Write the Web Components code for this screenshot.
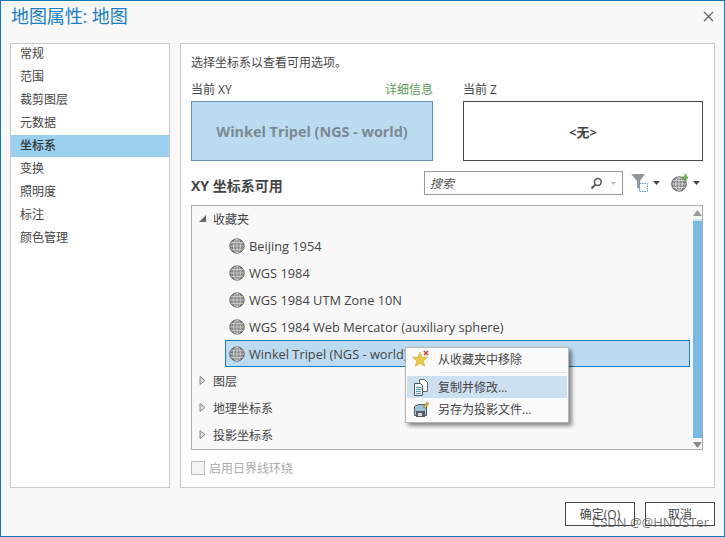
<!DOCTYPE html>
<html lang="zh-CN"><head><meta charset="utf-8"><title>地图属性</title>
<style>
html,body{margin:0;padding:0;background:#fff}
body{font:12px "Open Sans","Noto Sans CJK SC",sans-serif;color:#444}
</style></head><body>
<map-dialog heading="地图属性: 地图">
  <nav-list slot="nav">
    <nav-item>常规</nav-item><nav-item>范围</nav-item><nav-item>裁剪图层</nav-item><nav-item>元数据</nav-item>
    <nav-item selected>坐标系</nav-item><nav-item>变换</nav-item><nav-item>照明度</nav-item><nav-item>标注</nav-item><nav-item>颜色管理</nav-item>
  </nav-list>
  <crs-page slot="page"></crs-page>
  <dlg-button slot="buttons">确定(O)</dlg-button>
  <dlg-button slot="buttons">取消</dlg-button>
</map-dialog>
<script>
const FONT='"Open Sans","Noto Sans CJK SC",sans-serif';
const GLOBE=`<svg width="16" height="16" viewBox="0 0 16 16"><circle cx="8" cy="8" r="7.2" fill="#858585" stroke="#666" stroke-width="1"/><g fill="none" stroke="#d8d8d8" stroke-width=".8"><ellipse cx="8" cy="8" rx="3.4" ry="7"/><path d="M8 1v14M1 8h14M2 4.600h12M2 11.400h12"/></g></svg>`;
function def(name,html,init){
  customElements.define(name,class extends HTMLElement{
    constructor(){super();this.attachShadow({mode:'open'}).innerHTML=typeof html==='function'?html(this):html;}
    connectedCallback(){
      if(typeof html==='function')this.shadowRoot.innerHTML=html(this);
      if(init)init(this);
    }
  });
}
def('map-dialog',h=>`<style>
:host{display:flex;flex-direction:column;position:relative;box-sizing:border-box;width:725px;height:537px;background:#f8f8f8;border:1px solid #1279b6;font:12px ${FONT};color:#444;overflow:hidden}
header{height:42px;flex:none;display:flex;align-items:center;justify-content:space-between;padding:0 10px 12px 10px;box-sizing:border-box}
h1{margin:0;font:400 18px ${FONT};color:#1a7fc0;line-height:24px;letter-spacing:-.1px}
svg{display:block}
main{flex:none;display:flex;gap:10px;height:445px;padding:0 9px}
footer{flex:1;display:flex;justify-content:flex-end;gap:10px;padding:14px 9px 0}
.mark{position:absolute;left:591px;top:511px;font:13px/20px ${FONT};color:rgba(75,75,75,.75);white-space:nowrap;pointer-events:none}
</style>
<header><h1>${h.getAttribute('heading')}</h1><svg width="11" height="11" viewBox="0 0 11 11"><path d="M1 1l9 9M10 1l-9 9" stroke="#666" stroke-width="1.3" fill="none"/></svg></header>
<main><slot name="nav"></slot><slot name="page"></slot></main>
<footer><slot name="buttons"></slot></footer>
<div class="mark">CSDN @@HNUSTer</div>`);
def('nav-list',`<style>:host{display:flex;flex-direction:column;gap:1px;box-sizing:border-box;width:160px;height:445px;background:#fff;border:1px solid #c9c9c9;overflow:hidden}
.in{display:flex;flex-direction:column;gap:1px;margin-top:-1px}</style><div class="in"><slot></slot></div>`);
def('nav-item',`<style>:host{display:flex;align-items:center;height:22px;padding-left:9px;color:#444;line-height:22px}
:host([selected]){background:#9bd0f0;font-weight:500;color:#333}</style><slot></slot>`);
def('dlg-button',`<style>:host{display:flex;align-items:center;justify-content:center;box-sizing:border-box;width:70px;height:24px;background:#fff;border:1px solid #444;color:#444}</style><slot></slot>`);
def('crs-box',h=>`<style>:host{display:flex;align-items:center;justify-content:center;box-sizing:border-box;height:60px;border:1px solid ${h.hasAttribute('active')?'#5b94bd':'#444'};background:${h.hasAttribute('active')?'#bcdbf1':'#fff'};color:${h.hasAttribute('active')?'#7b8892':'#444'};font-weight:700;font-size:${h.hasAttribute('active')?'14.4':'13'}px}</style><slot></slot>`);
def('search-box',`<style>:host{display:flex;align-items:center;box-sizing:border-box;width:199px;height:24px;border:1px solid #9a9a9a;background:#fff;padding:0 6px 0 5px;flex:none}
i{flex:1;font-style:italic;color:#555}svg{display:block}</style>
<i>搜索</i>
<svg width="13" height="13" viewBox="0 0 13 13"><circle cx="7.8" cy="5" r="3.4" fill="none" stroke="#555" stroke-width="1.5"/><path d="M5.3 7.6L1.5 11.5" stroke="#555" stroke-width="2"/></svg>
<svg style="margin-left:8px" width="5" height="3" viewBox="0 0 5 3"><path d="M0 0h5L2.500 3z" fill="#bbb"/></svg>`);
def('tree-row',h=>{
  const k=h.getAttribute('kind');
  const a=k==='open'?`<svg width="7" height="7" viewBox="0 0 7 7"><path d="M0 7h7V0z" fill="#666"/></svg>`:
    `<svg width="7" height="9" viewBox="0 0 7 9"><path d="M1 .5l5 4-5 4z" fill="#ddd" stroke="#888"/></svg>`;
  return `<style>:host{display:flex;align-items:center;box-sizing:border-box;height:27px;color:#444}
  .g{display:flex;align-items:center;flex:1;height:100%;box-sizing:border-box;margin-left:33px;padding-left:3px;gap:4px;font-size:12.800px;border:1px solid transparent}
  :host([selected]) .g{background:#bcdbf1;border-color:#1b7db8}
  .f{display:flex;align-items:center;padding-left:7px}.f span{margin-left:7px}.f div{width:7px;display:flex;justify-content:center}
  svg{display:block;flex:none}</style>`+
  (k==='item'?`<div class="g">${GLOBE}<slot></slot></div>`:`<div class="f"><div>${a}</div><span><slot></slot></span></div>`);
});
def('crs-scroll',`<style>:host{display:flex;flex-direction:column;align-items:center;box-sizing:border-box;width:10px;height:243px;padding-top:4px}
svg{display:block;flex:none}.t{flex:none;width:9px;height:219px;margin-top:3px;background:#7ab9e6;border-top:2px solid #cfe3f2;box-sizing:border-box}</style>
<svg width="9" height="6" viewBox="0 0 9 6"><path d="M4.500 0L9 6H0z" fill="#9a9a9a"/></svg><div class="t"></div>
<svg style="margin-top:4px" width="9" height="6" viewBox="0 0 9 6"><path d="M0 0h9L4.500 6z" fill="#888"/></svg>`);
def('menu-item',h=>`<style>:host{display:flex;align-items:center;height:22px;box-sizing:border-box;padding-left:3px;color:#444}
:host([hot]){background:#cde0f1}::slotted(svg){display:block;flex:none}.i{width:22px;display:flex;justify-content:center}span{margin-left:6px}</style>
<div class="i"><slot name="icon"></slot></div><span><slot></slot></span>`);
def('context-menu',`<style>:host{position:absolute;left:224px;top:303px;box-sizing:border-box;width:164px;height:76px;background:#fafafa;border:1px solid #b5b5b5;box-shadow:3px 3px 4px rgba(0,0,0,.45);padding:0 1px;display:flex;flex-direction:column;z-index:3}
hr{border:0;border-top:1px solid #ddd;margin:3px 0 3px 33px;height:0}</style><slot name="a"></slot><hr><slot name="b"></slot>`);
def('crs-page',`<style>
:host{display:block;box-sizing:border-box;position:relative;width:535px;height:445px;background:#fff;border:1px solid #c9c9c9;padding:9px 11px 0 10px;font:12px ${FONT};color:#444}
p{margin:0;height:20px;line-height:20px}
.grid{display:grid;grid-template-columns:242px 30px 240px;grid-template-rows:21px 60px;margin-top:7px}
.lab{display:flex;justify-content:space-between;line-height:20px;}
.lab em{font-style:normal;color:#5d9a57}
.z{grid-column:3}
.bar{display:flex;align-items:center;height:24px;margin-top:10px}
h2{flex:0 0 233px;margin:0;padding-top:4px;font:700 14px ${FONT};color:#444}
.tool{display:flex;align-items:center;gap:5px;margin-left:8px;padding-bottom:1px}.tool+.tool{margin-left:11px}
svg{display:block}
.tree{display:flex;box-sizing:border-box;height:245px;margin-top:10px;background:#f8f8f8;border:1px solid #aaa}
.rows{flex:1;margin:-1px 2px 0 0}
.chk{display:flex;align-items:center;gap:4px;height:14px;margin-top:11px;color:#aaa}
.chk i{width:12px;height:12px;border:1px solid #bbb;background:#f4f4f4;display:block}
</style>
<p>选择坐标系以查看可用选项。</p>
<div class="grid">
 <div class="lab"><span>当前 XY</span><em>详细信息</em></div><div class="lab z">当前 Z</div>
 <crs-box active>Winkel Tripel (NGS - world)</crs-box><crs-box class="z">&lt;无&gt;</crs-box>
</div>
<div class="bar"><h2>XY 坐标系可用</h2><search-box></search-box>
 <div class="tool"><svg width="17" height="18" viewBox="0 0 17 18"><path d="M0 0h14L9 7v9L6 13V7z" fill="#8f9a9c"/><path d="M8.500 9.500h8v8h-8z" fill="#fff" stroke="#4f9fc0" stroke-dasharray="1.500 1"/><path d="M6 7h3v6H6z" fill="#8f9a9c"/></svg>
 <svg width="7" height="4" viewBox="0 0 7 4"><path d="M0 0h7L3.500 4z" fill="#444"/></svg></div>
 <div class="tool"><svg width="17" height="18" viewBox="0 0 17 18"><circle cx="8" cy="10" r="7.300" fill="#8b8b8b" stroke="#666"/><g fill="none" stroke="#ddd" stroke-width=".8"><ellipse cx="8" cy="10" rx="3.400" ry="7"/><path d="M8 3v14M1 10h14M2 6.500h12M2 13.500h12"/></g><path d="M11 2.500h2.500V0h2v2.500H17v2h-1.500V7h-2V4.500H11z" fill="#5fb04a"/></svg>
 <svg width="7" height="4" viewBox="0 0 7 4"><path d="M0 0h7L3.500 4z" fill="#444"/></svg></div>
</div>
<div class="tree"><div class="rows">
 <tree-row kind="open">收藏夹</tree-row>
 <tree-row kind="item">Beijing 1954</tree-row>
 <tree-row kind="item">WGS 1984</tree-row>
 <tree-row kind="item">WGS 1984 UTM Zone 10N</tree-row>
 <tree-row kind="item">WGS 1984 Web Mercator (auxiliary sphere)</tree-row>
 <tree-row kind="item" selected>Winkel Tripel (NGS - world)</tree-row>
 <tree-row>图层</tree-row><tree-row>地理坐标系</tree-row><tree-row>投影坐标系</tree-row>
</div><crs-scroll></crs-scroll></div>
<div class="chk"><i></i>启用日界线环绕</div>
<context-menu>
 <menu-item slot="a" style="height:21px">从收藏夹中移除<svg slot="icon" width="18" height="18" viewBox="0 0 18 18"><path d="M8 2l2 5 5.500.4-4.200 3.500 1.400 5.400L8 13.400l-4.700 2.900 1.400-5.400L.5 7.400 6 7z" fill="#e8c84a" stroke="#c9a436" stroke-width=".5"/><path d="M12 1l4 4M16 1l-4 4" stroke="#c8403a" stroke-width="1.600"/></svg></menu-item>
 <menu-item slot="b" hot>复制并修改...<svg slot="icon" width="16" height="17" viewBox="0 0 16 17"><path d="M6.500.5h5l3 3v9h-8z" fill="#fff" stroke="#666"/><path d="M1.500 4.500h6l2 2v10h-8z" fill="#eef4f8" stroke="#555"/><path d="M3 8.500h5M3 10.500h5M3 12.500h5M3 14.500h5" stroke="#4d9cc0"/></svg></menu-item>
 <menu-item slot="b">另存为投影文件...<svg slot="icon" width="17" height="17" viewBox="0 0 17 17"><path d="M1.500 5.500l4-2h8v11h-12z" fill="#9bc3d8" stroke="#556"/><path d="M3 10h9v6H3z" fill="#5a5a6a"/><path d="M5 12h4v3H5z" fill="#ddd"/><path d="M10 6l4-5 2 1.500-4 5z" fill="#c8b048" stroke="#7a8a3a" stroke-width=".5"/></svg></menu-item>
</context-menu>`);
</script>
</body></html>
